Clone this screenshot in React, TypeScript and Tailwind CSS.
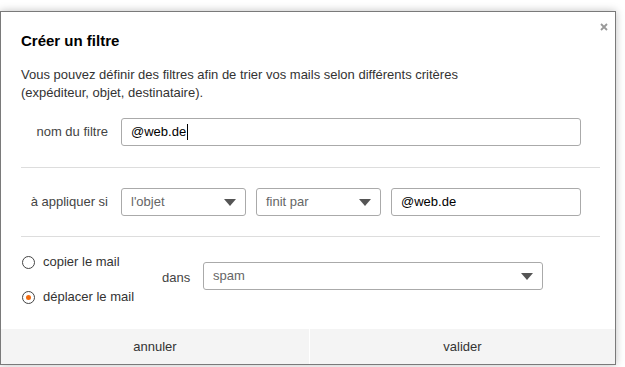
import React from "react";

const Arrow = () => (
  <svg width="12" height="7" viewBox="0 0 12 7" className="shrink-0">
    <path d="M0 0 L12 0 L6 7 Z" fill="#555" />
  </svg>
);

const Select = ({ label, w }: { label: string; w: string }) => (
  <div
    className={`${w} h-[28px] border border-[#aaa] rounded-[3px] bg-white flex items-center justify-between pl-[9px] pr-[9px] text-[13px] text-[#666]`}
  >
    <span>{label}</span>
    <Arrow />
  </div>
);

const Radio = ({ checked, label }: { checked?: boolean; label: string }) => (
  <div className="h-[22px] flex items-center">
    <div className="w-[13px] h-[13px] rounded-full border border-[#444] bg-white flex items-center justify-center ml-[1px]">
      {checked && <div className="w-[5px] h-[5px] rounded-full bg-[#f26b0f]" />}
    </div>
    <span className="ml-[8px] text-[13px] text-[#333]">{label}</span>
  </div>
);

export default function App() {
  return (
    <div
      className="w-[625px] h-[367px] bg-white pt-[11px]"
      style={{ fontFamily: '"Liberation Sans", Arial, sans-serif' }}
    >
      <div className="relative w-[616px] h-[354px] border border-[#7a7a7a] bg-white flex flex-col shadow-[0_0_8px_rgba(0,0,0,0.25)]">
        <svg
          width="8"
          height="8"
          viewBox="0 0 8 8"
          className="absolute top-[11px] right-[7px]"
        >
          <path d="M1 1 L7 7 M7 1 L1 7" stroke="#999" strokeWidth="1.8" />
        </svg>

        <div className="flex-1 pl-[20px] pr-[15px] pt-[20px]">
          <div className="text-[15px] leading-[18px] font-bold text-black">
            Créer un filtre
          </div>
          <div className="mt-[16px] text-[13px] leading-[18px] text-[#333]">
            Vous pouvez définir des filtres afin de trier vos mails selon
            différents critères
            <br />
            (expéditeur, objet, destinataire).
          </div>

          <div className="mt-[16px] flex items-center">
            <div className="w-[87px] text-right text-[13px] text-[#444]">
              nom du filtre
            </div>
            <div className="ml-[13px] w-[460px] h-[28px] border border-[#aaa] rounded-[3px] flex items-center pl-[9px] text-[13px] text-black">
              @web.de
              <span className="inline-block w-[1px] h-[16px] bg-black ml-[1px]" />
            </div>
          </div>

          <div className="mt-[21px] h-[1px] bg-[#ddd]" />

          <div className="mt-[20px] flex items-center">
            <div className="w-[87px] text-right text-[13px] text-[#444]">
              à appliquer si
            </div>
            <div className="ml-[13px] flex gap-[10px]">
              <Select label="l'objet" w="w-[125px]" />
              <Select label="finit par" w="w-[125px]" />
              <div className="w-[190px] h-[28px] border border-[#aaa] rounded-[3px] flex items-center pl-[9px] text-[13px] text-black">
                @web.de
              </div>
            </div>
          </div>

          <div className="mt-[20px] h-[1px] bg-[#ddd]" />

          <div className="mt-[14px] flex items-start">
            <div className="w-[141px] flex flex-col gap-[13px]">
              <Radio label="copier le mail" />
              <Radio checked label="déplacer le mail" />
            </div>
            <div className="mt-[17px] w-[41px] text-[13px] text-[#444]">
              dans
            </div>
            <div className="mt-[11px]">
              <Select label="spam" w="w-[340px]" />
            </div>
          </div>
        </div>

        <div className="h-[35px] flex bg-[#f4f4f4] text-[13px] text-[#333]">
          <div className="w-[308px] flex items-center justify-center">
            annuler
          </div>
          <div className="w-[1px] bg-white" />
          <div className="flex-1 flex items-center justify-center">valider</div>
        </div>
      </div>
    </div>
  );
}
